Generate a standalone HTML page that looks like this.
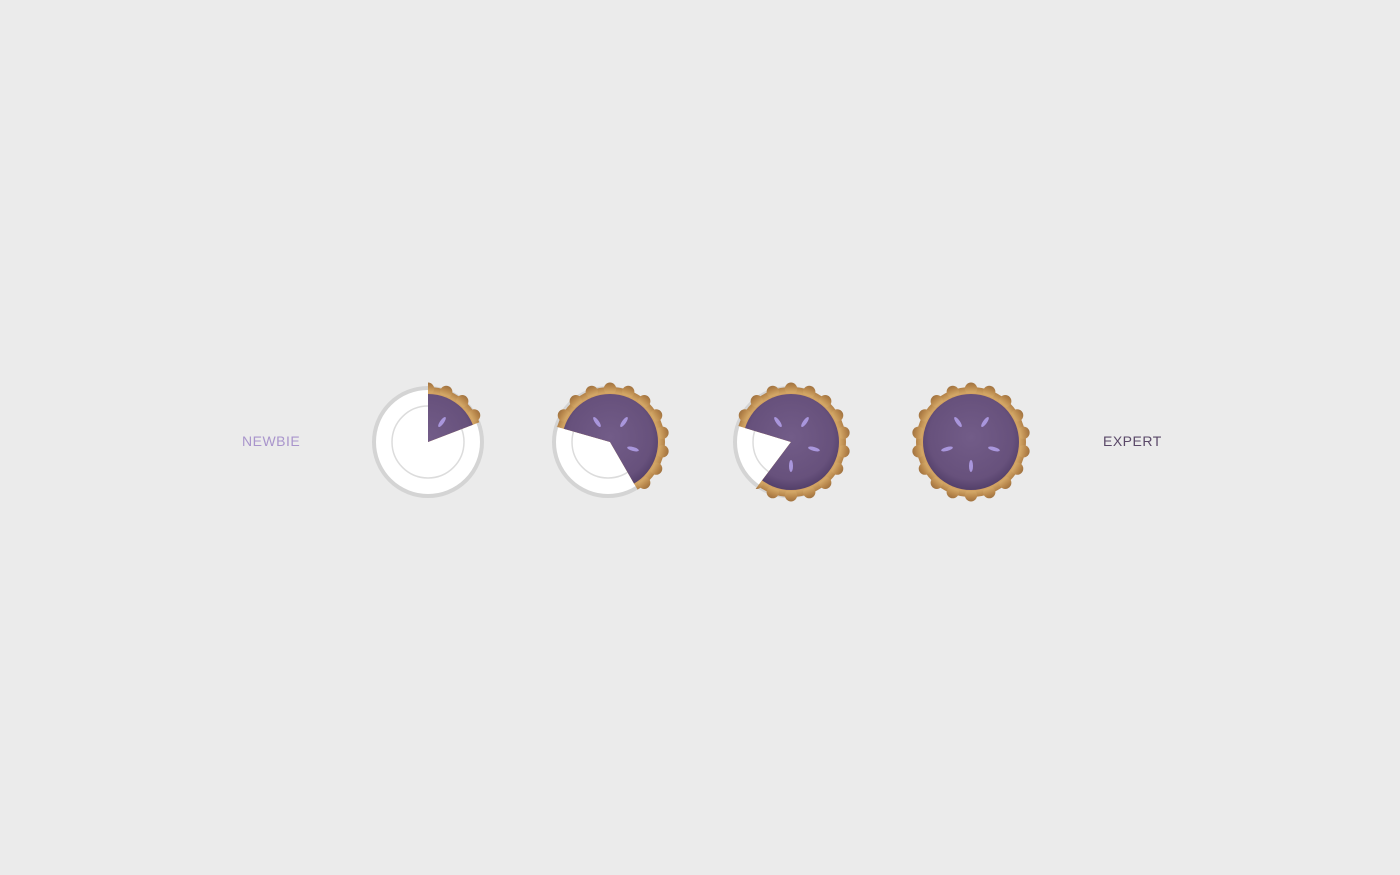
<!DOCTYPE html>
<html><head><style>
html,body{margin:0;padding:0;background:#ebebeb;width:1400px;height:875px;overflow:hidden}
.t{position:absolute;top:433px;font-family:"Liberation Sans",sans-serif;font-size:14px;letter-spacing:0.5px}
</style></head><body>
<div class="t" style="left:242px;color:#a995cc">NEWBIE</div>
<div class="t" style="left:1103px;color:#5a4868">EXPERT</div>
<svg width="1400" height="875" style="position:absolute;left:0;top:0">
<defs>
<radialGradient id="fill" cx="0.5" cy="0.45" r="0.55">
<stop offset="0" stop-color="#725c88"/><stop offset="0.8" stop-color="#67517c"/><stop offset="1" stop-color="#54406a"/>
</radialGradient>
<radialGradient id="crust" gradientUnits="userSpaceOnUse" cx="0" cy="0" r="60">
<stop offset="0.8" stop-color="#d6ab6a"/><stop offset="0.9" stop-color="#b8874c"/><stop offset="1" stop-color="#94683a"/>
</radialGradient>
<g id="pie">
<g fill="url(#crust)">
<circle r="55"/>
<g transform="scale(1.025)">
<circle cx="0" cy="-52" r="6"/><circle cx="17.8" cy="-48.9" r="6"/><circle cx="33.4" cy="-39.8" r="6"/><circle cx="45" cy="-26" r="6"/><circle cx="51.2" cy="-9" r="6"/><circle cx="51.2" cy="9" r="6"/><circle cx="45" cy="26" r="6"/><circle cx="33.4" cy="39.8" r="6"/><circle cx="17.8" cy="48.9" r="6"/><circle cx="0" cy="52" r="6"/><circle cx="-17.8" cy="48.9" r="6"/><circle cx="-33.4" cy="39.8" r="6"/><circle cx="-45" cy="26" r="6"/><circle cx="-51.2" cy="9" r="6"/><circle cx="-51.2" cy="-9" r="6"/><circle cx="-45" cy="-26" r="6"/><circle cx="-33.4" cy="-39.8" r="6"/><circle cx="-17.8" cy="-48.9" r="6"/>
</g>
</g>
<circle r="49.5" fill="#d2a262"/>
<circle r="48" fill="url(#fill)"/>
<g fill="#a996dc">
<ellipse cx="-13" cy="-20" rx="2" ry="6" transform="rotate(-35 -13 -20)"/>
<ellipse cx="14" cy="-20" rx="2" ry="6" transform="rotate(35 14 -20)"/>
<ellipse cx="-24" cy="7" rx="2" ry="6" transform="rotate(75 -24 7)"/>
<ellipse cx="23" cy="7" rx="2" ry="6" transform="rotate(-75 23 7)"/>
<ellipse cx="0" cy="24" rx="2" ry="6"/>
</g>
</g>
<g id="plate">
<circle r="54" fill="#fff" stroke="#d4d4d4" stroke-width="4"/>
<circle r="36" fill="none" stroke="#dcdcdc" stroke-width="1.5"/>
</g>
<clipPath id="c1"><path d="M428 442 L428 372 A70 70 0 0 1 493.4 416.9 Z"/></clipPath>
<clipPath id="c2"><path d="M610 442 L542.7 422.7 A70 70 0 1 1 645 502.6 Z"/></clipPath>
<clipPath id="c3"><path d="M791 442 L724.1 421.6 A70 70 0 1 1 748.9 497.9 Z"/></clipPath>
</defs>
<use href="#plate" x="428" y="442"/>
<g clip-path="url(#c1)"><use href="#pie" x="428" y="442"/></g>
<use href="#plate" x="608" y="442"/>
<g clip-path="url(#c2)"><use href="#pie" x="610" y="442"/></g>
<use href="#plate" x="789" y="442"/>
<g clip-path="url(#c3)"><use href="#pie" x="791" y="442"/></g>
<use href="#pie" x="971" y="442"/>
</svg>
</body></html>
